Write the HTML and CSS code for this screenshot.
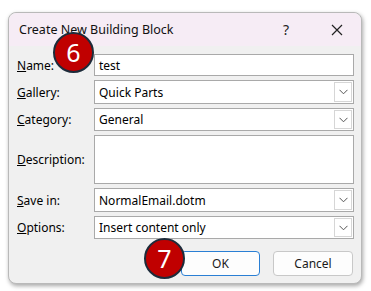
FILE: index.html
```html
<!DOCTYPE html>
<html>
<head>
<meta charset="utf-8">
<link rel="stylesheet" href="styles.css">
</head>
<body>
<div class="dialog">
  <div class="titlebar">
    <span class="title">Create New Building Block</span>
    <span class="help">?</span>
    <svg class="close" width="12" height="12" viewBox="0 0 12 12"><path d="M1 1 L11 11 M11 1 L1 11" stroke="#222" stroke-width="1.2" fill="none"/></svg>
  </div>
  <div class="body">
    <div class="form">
      <label class="lbl"><u>N</u>ame:</label>
      <div class="field input">test</div>

      <label class="lbl"><u>G</u>allery:</label>
      <div class="field select"><span>Quick Parts</span><span class="drop"><svg width="9" height="6" viewBox="0 0 9 6"><path d="M0.5 0.8 L4.5 4.8 L8.5 0.8" stroke="#555" stroke-width="1" fill="none"/></svg></span></div>

      <label class="lbl"><u>C</u>ategory:</label>
      <div class="field select"><span>General</span><span class="drop"><svg width="9" height="6" viewBox="0 0 9 6"><path d="M0.5 0.8 L4.5 4.8 L8.5 0.8" stroke="#555" stroke-width="1" fill="none"/></svg></span></div>

      <label class="lbl"><u>D</u>escription:</label>
      <div class="field textarea"></div>

      <label class="lbl"><u>S</u>ave in:</label>
      <div class="field select"><span>NormalEmail.dotm</span><span class="drop"><svg width="9" height="6" viewBox="0 0 9 6"><path d="M0.5 0.8 L4.5 4.8 L8.5 0.8" stroke="#555" stroke-width="1" fill="none"/></svg></span></div>

      <label class="lbl"><u>O</u>ptions:</label>
      <div class="field select"><span>Insert content only</span><span class="drop"><svg width="9" height="6" viewBox="0 0 9 6"><path d="M0.5 0.8 L4.5 4.8 L8.5 0.8" stroke="#555" stroke-width="1" fill="none"/></svg></span></div>
    </div>
    <div class="buttons">
      <button class="btn primary">OK</button>
      <button class="btn">Cancel</button>
    </div>
  </div>
  <div class="badge b6">6</div>
  <div class="badge b7">7</div>
</div>
</body>
</html>
```
FILE: styles.css
```css
html, body {
  margin: 0;
  padding: 0;
}
body {
  width: 371px;
  height: 291px;
  background: #ffffff;
  font-family: "Noto Sans", "Open Sans", sans-serif;
  font-size: 12px;
  color: #000;
  overflow: hidden;
  position: relative;
}
.dialog {
  position: absolute;
  left: 8px;
  top: 12px;
  width: 352px;
  height: 270px;
  border: 1px solid #b9b9b9;
  border-radius: 8px;
  background: #f0f0f0;
  box-shadow: 1px 2px 4px rgba(0,0,0,0.35);
  overflow: visible;
}
.titlebar {
  height: 33px;
  background: #f6ecf5;
  border-radius: 8px 8px 0 0;
  display: flex;
  align-items: center;
  padding-left: 10px;
  position: relative;
}
.title {
  font-size: 12.5px;
  color: #111;
  flex: 1;
}
.help {
  font-size: 14px;
  color: #222;
  margin-right: 42px;
}
.close {
  margin-right: 18px;
}
.body {
  padding: 8px 7px 0 8px;
}
.form {
  display: grid;
  grid-template-columns: 77px 1fr;
  grid-template-rows: 22px 24px 23px 49px 24px 23px;
  row-gap: 4px;
  align-items: center;
}
.lbl {
  font-size: 12px;
  color: #000;
}
.field {
  height: 100%;
  box-sizing: border-box;
  border: 1px solid #a9a9a9;
  background: #fff;
  padding-left: 4px;
  display: flex;
  align-items: center;
  font-size: 12px;
}
.select span:first-child {
  flex: 1;
}
.drop {
  width: 18px;
  height: calc(100% - 2px);
  box-sizing: border-box;
  border: 1px solid #d6d6d6;
  margin-right: 1px;
  display: flex;
  align-items: center;
  justify-content: center;
  background: #fff;
}
.textarea {
  align-items: flex-start;
}
.buttons {
  display: flex;
  justify-content: flex-end;
  gap: 13px;
  margin-top: 12px;
  padding-right: 1px;
}
.btn {
  width: 80px;
  height: 25px;
  box-sizing: border-box;
  border: 1px solid #c8c8c8;
  border-radius: 4px;
  background: #fdfdfd;
  font-family: "Noto Sans", "Open Sans", sans-serif;
  font-size: 12px;
  color: #1a1a1a;
  padding: 0;
}
.btn.primary {
  border: 1px solid #2a7fd4;
  width: 79px;
}
.badge {
  position: absolute;
  width: 37px;
  height: 37px;
  border-radius: 50%;
  background: #c00000;
  border: 2px solid #1d2b3a;
  color: #fff;
  font-family: "Noto Sans", "Open Sans", sans-serif;
  font-size: 25px;
  display: flex;
  align-items: center;
  justify-content: center;
  line-height: 1;
}
.b6 {
  left: 44px;
  top: 19px;
}
.b7 {
  left: 135px;
  top: 225px;
}
```
